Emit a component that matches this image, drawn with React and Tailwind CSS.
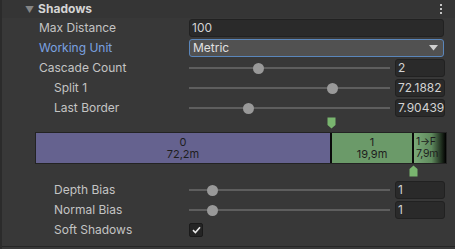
import React from "react";

const font = { fontFamily: "Inter, 'Noto Sans', sans-serif" };

function Label({ children, indent, blue }) {
  return (
    <div
      className={`${indent ? "pl-[54px]" : "pl-[39px]"} w-[189px] shrink-0 text-[12px] leading-none ${blue ? "text-[#7ba2e0]" : "text-[#c4c4c4]"}`}
    >
      {children}
    </div>
  );
}

function Slider({ pos, value }) {
  return (
    <div className="flex flex-1 items-center h-full">
      <div className="relative w-[201px] h-full">
        <div className="absolute left-0 right-0 top-[9px] h-[2px] bg-[#5e5e5e]" />
        <div
          className="absolute top-[5px] w-[11px] h-[11px] rounded-full bg-[#999999]"
          style={{ left: pos - 189 - 5.5 }}
        />
      </div>
      <div className="ml-[5px] w-[50px] h-[18px] rounded-[3px] bg-[#2a2a2a] border border-[#212121] text-[12px] text-[#d2d2d2] pl-[2px] leading-[16px] overflow-hidden whitespace-nowrap">
        {value}
      </div>
    </div>
  );
}

export default function App() {
  return (
    <div
      className="w-[455px] h-[249px] bg-[#383838] overflow-hidden flex flex-col border-l-2 border-[#2b2b2b]"
      style={font}
    >
      <div className="h-[18px] shrink-0 flex items-center bg-[#353535] -ml-[2px] pl-[2px]">
        <span className="ml-[23px] text-[9px] text-[#858585] leading-none">▼</span>
        <span className="ml-[4px] text-[12px] font-bold text-[#d4d4d4] leading-none">Shadows</span>
        <div className="ml-auto mr-[13px] flex flex-col gap-[2px]">
          <div className="w-[2px] h-[2px] bg-[#c4c4c4]" />
          <div className="w-[2px] h-[2px] bg-[#c4c4c4]" />
          <div className="w-[2px] h-[2px] bg-[#c4c4c4]" />
        </div>
      </div>

      <div className="flex flex-col pr-[11px] -ml-[2px]">
        <div className="h-[20px] flex items-center">
          <Label>Max Distance</Label>
          <div className="flex-1 h-[18px] rounded-[3px] bg-[#2a2a2a] border border-[#212121] text-[12px] text-[#d2d2d2] pl-[2px] leading-[16px]">
            100
          </div>
        </div>
        <div className="h-[20px] flex items-center">
          <Label blue>Working Unit</Label>
          <div className="flex-1 h-[18px] rounded-[3px] bg-[#515151] border border-[#5a86bb] text-[12px] text-[#e0e0e0] pl-[3px] leading-[16px] flex items-center">
            <span>Metric</span>
            <svg className="ml-auto mr-[5px]" width="9" height="6" viewBox="0 0 9 6">
              <path d="M0 0 H9 L4.5 5.5 Z" fill="#d0d0d0" />
            </svg>
          </div>
        </div>
        <div className="h-[20px] flex items-center">
          <Label>Cascade Count</Label>
          <Slider pos={258} value="2" />
        </div>
        <div className="h-[20px] flex items-center">
          <Label indent>Split 1</Label>
          <Slider pos={332} value="72.1882" />
        </div>
        <div className="h-[20px] flex items-center">
          <Label indent>Last Border</Label>
          <Slider pos={248} value="7.904391" />
        </div>
      </div>

      <div className="relative h-[62px] shrink-0 -ml-[2px]">
        <svg className="absolute left-[327px] top-[-1px]" width="9" height="12" viewBox="0 0 9 12">
          <path d="M0.5 0.5 H8.5 V8 L4.5 11.5 L0.5 8 Z" fill="#79b56f" />
        </svg>
        <div className="absolute left-[35px] top-[14px] w-[412px] h-[32px] bg-[#232323] p-[1px] flex">
          <div className="w-[294px] h-full bg-[#65628f] flex flex-col items-center justify-center text-[11px] leading-[12px] text-[#1e1e1e]">
            <span>0</span>
            <span>72,2m</span>
          </div>
          <div className="w-[2px] h-full bg-[#0a0a0a]" />
          <div className="w-[80px] h-full bg-[#6b9a69] flex flex-col items-center justify-center text-[11px] leading-[12px] text-[#1e1e1e]">
            <span>1</span>
            <span>19,9m</span>
          </div>
          <div className="w-[2px] h-full bg-[#0a0a0a]" />
          <div className="flex-1 h-full bg-[linear-gradient(to_right,#7aa978_0%,#5f8a5d_55%,#000000_100%)] flex flex-col items-start justify-center pl-[2px] text-[10.5px] tracking-[-0.3px] leading-[12px] text-[#1e1e1e] overflow-hidden whitespace-nowrap">
            <span>1→F</span>
            <span>7,9m</span>
          </div>
        </div>
        <svg className="absolute left-[409px] top-[47px]" width="9" height="12" viewBox="0 0 9 12">
          <path d="M0.5 11.5 H8.5 V4 L4.5 0.5 L0.5 4 Z" fill="#79b56f" />
        </svg>
      </div>

      <div className="flex flex-col pr-[11px] -ml-[2px]">
        <div className="h-[20px] flex items-center">
          <Label indent>Depth Bias</Label>
          <Slider pos={212} value="1" />
        </div>
        <div className="h-[20px] flex items-center">
          <Label indent>Normal Bias</Label>
          <Slider pos={212} value="1" />
        </div>
        <div className="h-[20px] flex items-center">
          <Label indent>Soft Shadows</Label>
          <div className="w-[14px] h-[14px] rounded-[2px] bg-[#242424] border border-[#1a1a1a] flex items-center justify-center">
            <svg width="9" height="8" viewBox="0 0 9 8">
              <path d="M1 4.2 L3.4 6.5 L8 1.3" stroke="#e8e8e8" strokeWidth="1.6" fill="none" />
            </svg>
          </div>
        </div>
      </div>
      <div className="mt-auto h-[3px] border-t border-[#262626] -ml-[2px]" />
    </div>
  );
}
